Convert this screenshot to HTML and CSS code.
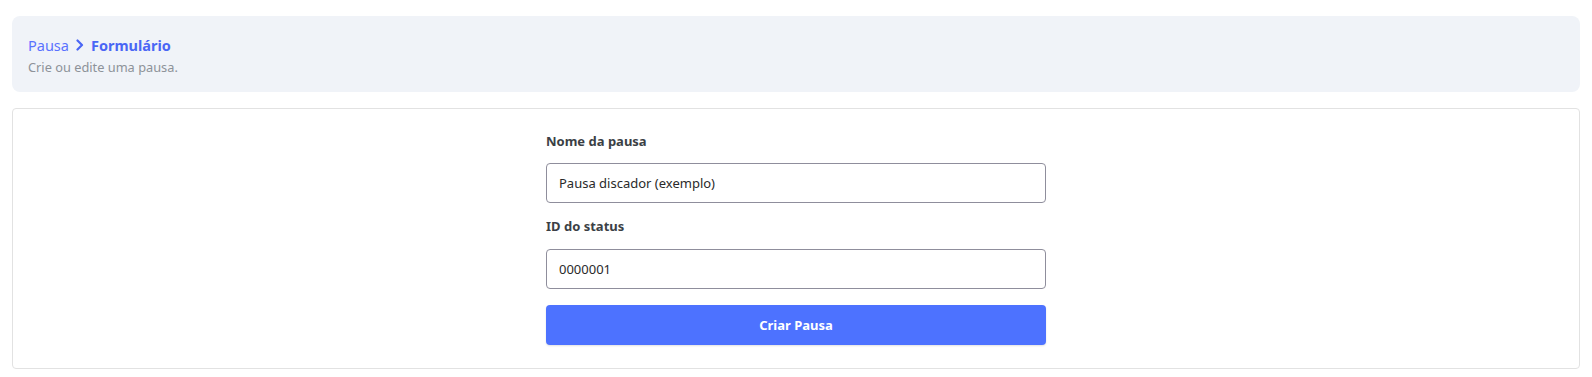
FILE: index.html
```html
<!DOCTYPE html>
<html lang="pt-BR">
<head>
<meta charset="utf-8">
<title>Pausa - Formulário</title>
<link rel="stylesheet" href="styles.css">
</head>
<body>
<div class="page">
  <header class="page-header">
    <nav class="breadcrumb">
      <span class="crumb">Pausa</span>
      <svg class="chev" width="10" height="12" viewBox="0 0 10 12"><path d="M2.5 1.5 L7 6 L2.5 10.5" fill="none" stroke="currentColor" stroke-width="2.2" stroke-linecap="round" stroke-linejoin="round"/></svg>
      <span class="crumb current">Formulário</span>
    </nav>
    <p class="subtitle">Crie ou edite uma pausa.</p>
  </header>
  <section class="card">
    <form class="form">
      <label class="label" for="nome">Nome da pausa</label>
      <input class="input" id="nome" type="text" value="Pausa discador (exemplo)">
      <label class="label" for="status">ID do status</label>
      <input class="input last" id="status" type="text" value="0000001">
      <button class="btn" type="button">Criar Pausa</button>
    </form>
  </section>
</div>
</body>
</html>
```
FILE: styles.css
```css
* { box-sizing: border-box; }
html, body { margin: 0; background: #ffffff; }
body {
  font-family: "Noto Sans", "Open Sans", sans-serif;
  color: #333;
}
.page {
  padding: 16px 12px 0 12px;
  display: flex;
  flex-direction: column;
  gap: 16px;
}
.page-header {
  background: #f0f3f8;
  border-radius: 8px;
  height: 76px;
  padding: 19px 16px 0 16px;
}
.breadcrumb {
  display: flex;
  align-items: center;
  gap: 6px;
  font-size: 14.5px;
  line-height: 20px;
}
.crumb { color: #5a72ff; }
.crumb.current { color: #4a66f5; font-weight: 700; }
.chev { color: #4a66f5; }
.subtitle {
  margin: 3px 0 0 0;
  font-size: 12.8px;
  line-height: 18px;
  color: #8d9299;
}
.card {
  border: 1px solid #e2e2e2;
  border-radius: 4px;
  padding: 23px 0 23px 0;
  display: flex;
  justify-content: center;
}
.form {
  width: 500px;
  display: flex;
  flex-direction: column;
}
.label {
  font-size: 13px;
  font-weight: 700;
  line-height: 18px;
  color: #3b3f45;
  margin-bottom: 13px;
}
.input + .label { margin-bottom: 14px; }
.input {
  height: 40px;
  border: 1px solid #8f8e9c;
  border-radius: 4px;
  padding: 0 12px;
  font-family: inherit;
  font-size: 13px;
  color: #2a2a2a;
  margin-bottom: 14px;
  outline: none;
}
.input.last { margin-bottom: 16px; }
.btn {
  height: 40px;
  border: none;
  border-radius: 4px;
  background: #4d72ff;
  color: #fff;
  font-family: inherit;
  font-size: 13px;
  font-weight: 700;
  box-shadow: 0 1px 2px rgba(0,0,0,0.12);
}
```
